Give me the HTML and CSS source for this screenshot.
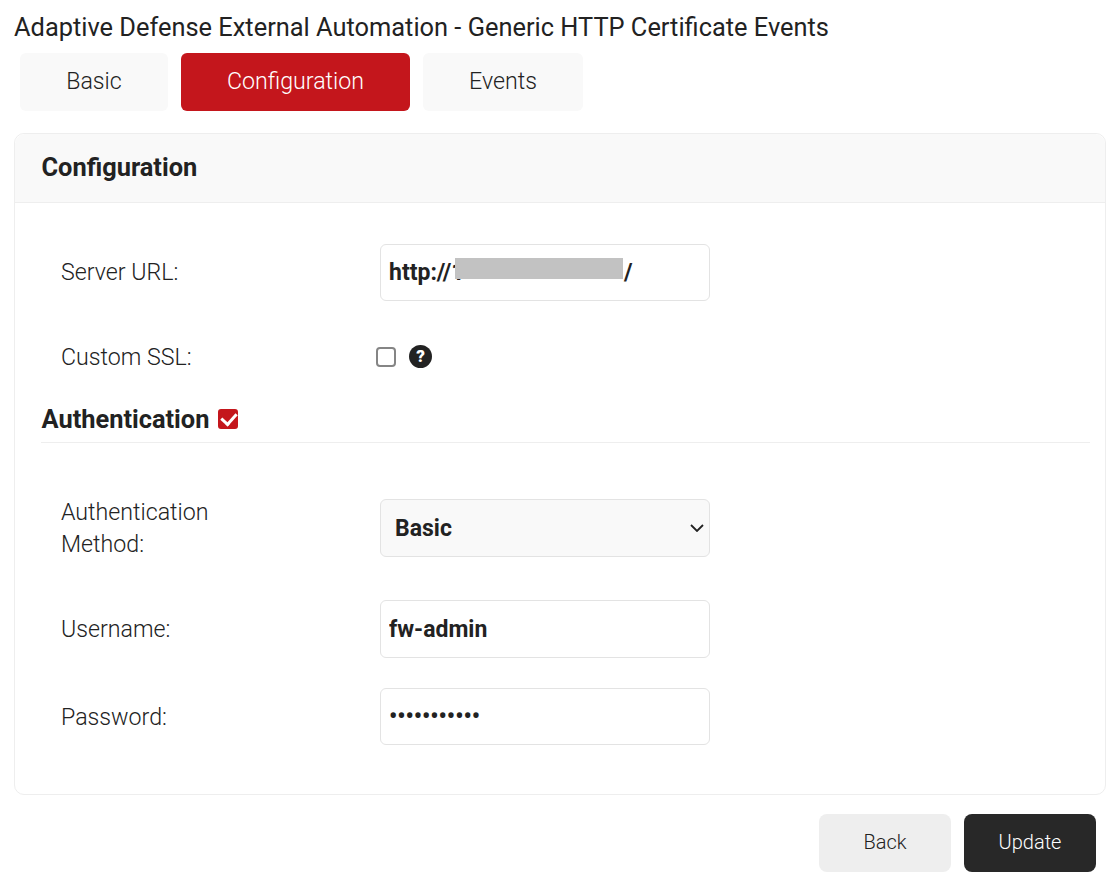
FILE: index.html
```html
<!DOCTYPE html>
<html lang="en">

<head>
    <meta charset="UTF-8">
    <meta name="viewport" content="width=device-width, initial-scale=1.0">
    <title>Generic HTTP Certificate Events</title>

    <link rel="stylesheet" href="styles.css">
</head>

<body>
    <h1 class="page-title">Adaptive Defense External Automation - Generic HTTP Certificate Events</h1>

    <nav class="tabs">
        <a class="tab tab-basic">Basic</a>
        <a class="tab tab-config active">Configuration</a>
        <a class="tab tab-events">Events</a>
    </nav>

    <section class="panel">
        <header class="panel-head">
            <h2>Configuration</h2>
        </header>

        <form class="panel-body">
            <div class="row row-url">
                <label>Server URL:</label>
                <div class="field url-field">
                    <input type="text" class="text-input" value="http://1">
                    <span class="redact"></span>
                    <span class="url-end">/</span>
                </div>
            </div>

            <div class="row row-ssl">
                <label>Custom SSL:</label>
                <div class="check-wrap">
                    <input type="checkbox" class="check">
                    <span class="help">?</span>
                </div>
            </div>

            <div class="section-head">
                <h3>Authentication</h3>
                <input type="checkbox" class="check check-red" checked>
            </div>

            <div class="row row-method">
                <label>Authentication<br>Method:</label>
                <div class="field">
                    <select class="select-input">
                        <option>Basic</option>
                    </select>
                    <svg class="chevron" width="14" height="8" viewBox="0 0 14 8">
                        <path d="M1 1l6 6 6-6" fill="none" stroke="#222" stroke-width="1.8" />
                    </svg>
                </div>
            </div>

            <div class="row row-user">
                <label>Username:</label>
                <div class="field">
                    <input type="text" class="text-input" value="fw-admin">
                </div>
            </div>

            <div class="row row-pass">
                <label>Password:</label>
                <div class="field">
                    <input type="password" class="text-input" value="secretpass1">
                </div>
            </div>
        </form>
    </section>

    <div class="actions">
        <button class="btn btn-back">Back</button>
        <button class="btn btn-update">Update</button>
    </div>
</body>

</html>
```

FILE: styles.css
```css
* {
    box-sizing: border-box;
    margin: 0;
    font-family: Roboto, Arial, sans-serif;
}

body {
    background: #fff;
    color: #222;
    padding: 0 11px 0 14px;
}

.page-title {
    font-size: 25.4px;
    font-weight: 400;
    line-height: 28px;
    padding-top: 13px;
}

.tabs {
    display: flex;
    gap: 13px;
    margin: 12px 0 22px 6px;
}

.tab {
    display: block;
    height: 58px;
    line-height: 56px;
    text-align: center;
    font-size: 23.2px;
    font-weight: 300;
    background: #f9f9f9;
    border-radius: 6px;
}

.tab-basic {
    width: 148px;
}

.tab-config {
    width: 229px;
}

.tab-events {
    width: 160px;
}

.tab.active {
    background: #c4161c;
    color: #fff;
}

.panel {
    width: 1092px;
    height: 662px;
    border: 1px solid #eee;
    border-radius: 10px;
}

.panel-head {
    height: 69px;
    padding-left: 26px;
    background: #f9f9f9;
    border-bottom: 1px solid #eee;
    border-radius: 10px 10px 0 0;
}

.panel-head h2 {
    font-size: 25.4px;
    font-weight: 700;
    line-height: 66px;
    margin-left: 0.5px;
}

.panel-body {
    padding: 41px 15px 0 26px;
}

.row {
    display: flex;
    align-items: center;
    padding-left: 20px;
}

.row label {
    width: 319px;
    flex-shrink: 0;
    font-size: 23.2px;
    font-weight: 300;
    line-height: 32px;
}

.row-url label {
    padding-bottom: 2px;
}

.row-ssl {
    margin-top: 40px;
}

.row-method {
    margin-top: 53px;
}

.row-user {
    margin-top: 40px;
}

.row-pass {
    margin-top: 30px;
}

.field {
    position: relative;
    width: 330px;
}

.text-input,
.select-input {
    display: block;
    width: 100%;
    height: 58px;
    padding: 0 8px;
    font-size: 23px;
    font-weight: 700;
    color: #222;
    background: #fff;
    border: 1px solid #e3e3e3;
    border-radius: 6px;
    outline: none;
}

.url-field .text-input,
.row-pass .text-input {
    height: 57px;
}

.select-input {
    appearance: none;
    padding-left: 14px;
    background: #f9f9f9;
}

.chevron {
    position: absolute;
    top: 25px;
    right: 6px;
}

.redact {
    position: absolute;
    left: 75px;
    top: 14px;
    width: 168px;
    height: 21px;
    background: #c2c2c2;
}

.url-end {
    position: absolute;
    left: 244px;
    top: 15px;
    font-size: 23px;
    font-weight: 700;
}

.check-wrap {
    display: flex;
    align-items: center;
    gap: 13px;
    margin-left: -4px;
}

.check {
    appearance: none;
    position: relative;
    display: block;
    width: 20px;
    height: 20px;
    background: #fff;
    border: 2px solid #858585;
    border-radius: 4px;
}

.check-red {
    background: #c4161c;
    border-color: #c4161c;
    border-radius: 3px;
}

.check-red::after {
    content: "";
    position: absolute;
    left: 4px;
    top: -1px;
    width: 7px;
    height: 12px;
    border: solid #fff;
    border-width: 0 3.5px 3.5px 0;
    transform: rotate(42deg);
}

.help {
    width: 23px;
    height: 23px;
    margin-top: -1px;
    border-radius: 50%;
    background: #222;
    color: #fff;
    font-size: 17px;
    font-weight: 900;
    line-height: 23px;
    text-align: center;
}

.section-head {
    display: flex;
    align-items: center;
    gap: 9px;
    height: 47px;
    margin-top: 23px;
    padding-bottom: 1px;
    border-bottom: 1px solid #eee;
}

.section-head h3 {
    font-size: 25.4px;
    font-weight: 700;
    margin-left: 0.5px;
}

.actions {
    display: flex;
    justify-content: flex-end;
    gap: 13px;
    width: 1082px;
    margin-top: 19px;
}

.btn {
    width: 132px;
    height: 58px;
    padding-bottom: 3px;
    font-size: 20px;
    font-weight: 300;
    border: none;
    border-radius: 8px;
}

.btn-back {
    background: #eee;
    color: #222;
}

.btn-update {
    background: #282828;
    color: #fff;
}
```
